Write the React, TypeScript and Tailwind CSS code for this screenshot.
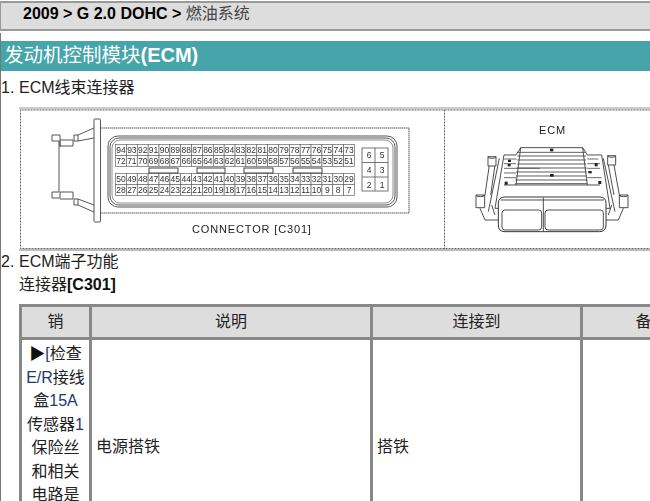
const row = (from: number) => Array.from({ length: 22 }, (_, i) => from - i);
const rowsY = [150, 161, 179, 190];
const rowsFrom = [94, 72, 50, 28];

function Diagram() {
  return (
    <svg width="631" height="145" viewBox="19 107 631 145" className="block" fontFamily="'Liberation Sans', sans-serif">
      <defs>
        <filter id="soft" x="0" y="0" width="100%" height="100%">
          <feGaussianBlur stdDeviation="0.3" />
        </filter>
      </defs>
      <g filter="url(#soft)">
        <rect x="19" y="107" width="640" height="2.500" fill="#ccc" />
        <rect x="19" y="249" width="640" height="2" fill="#bbb" />
        <path d="M20.500 110V248.500H660M20.500 110H660M444.500 110V249" fill="none" stroke="#666" strokeDasharray="1 .5" />

        <g fill="none" stroke="#444" strokeWidth=".9">
          <rect x="94" y="119" width="6.500" height="103" rx="1" />
          <path d="M52 135h8v5h13v6h-13v-6M60 141v6M52 135v6h7v51h-7v6h8v-6h13v7h-13M74 135h4v6h-4zM78 135l16-7M78 141l16-3M74 205h4v-6h-4zM78 199l16 6M78 205l16 7" />
          <path d="M100 128H409V213H100" strokeDasharray="1.500 .5" />
          <rect x="108" y="136" width="289" height="71" rx="10" />
          <rect x="110" y="138" width="285" height="67" rx="9" />
          <rect x="112" y="140" width="281" height="63" rx="8" strokeWidth=".6" />
        </g>

        <g fontSize="8.500" fill="#333" textAnchor="middle" stroke="none">
          {rowsFrom.map((from, r) =>
            row(from).map((n, i) => {
              const x = 121 + i * 10.86;
              return (
                <g key={n}>
                  <rect x={x - 5.430} y={rowsY[r] - 5.500} width="10.860" height="11" fill="#fff" stroke="#666" strokeWidth=".7" />
                  <text x={x} y={rowsY[r] + 3}>{n}</text>
                </g>
              );
            })
          )}
        </g>

        <g fill="#fff" stroke="#444" strokeWidth="1">
          <rect x="149" y="168" width="29" height="5" />
          <rect x="197" y="168" width="28" height="5" />
          <rect x="244" y="168" width="29" height="5" />
          <rect x="293" y="168" width="29" height="5" />
        </g>

        <g fill="none" stroke="#666" strokeWidth=".9">
          <rect x="362" y="148" width="26" height="43" />
          <path d="M375 148v43M362 162.500h26M362 177h26" />
        </g>
        <g fontSize="8.500" fill="#333" textAnchor="middle">
          <text x="369" y="158">6</text>
          <text x="382" y="158">5</text>
          <text x="369" y="173">4</text>
          <text x="382" y="173">3</text>
          <text x="369" y="188">2</text>
          <text x="382" y="188">1</text>
        </g>

        <text x="192" y="233" fontSize="11" fill="#222" letterSpacing=".85">CONNECTOR [C301]</text>
        <text x="539" y="134" fontSize="11" fill="#222" letterSpacing=".8">ECM</text>

        <g transform="translate(430 105) scale(.33333)" fill="none" stroke="#333" strokeWidth="2.600">
          <path d="M222 150H258L272 128H458L472 150H515L540 310H195Z" fill="#fff" />
          <path d="M272 128L258 240M458 128L472 240M222 240H510" />
          <path d="M262 142H466M262 153H468M262 165H468M262 177H468M260 189H470M258 201H470M258 213H470M256 225H472M256 236H472" stroke="#444" />
          <path d="M222 162H260M222 176H258M222 190H330M222 204H258M222 218H258M472 162H505M472 176H510M472 190H510M472 218H515" stroke="#555" />
          <path d="M178 180L165 270M195 180L182 270M208 160L175 320M520 160L555 320M535 180L552 270M552 180L568 270" />
          <path d="M160 270L150 310L165 345H208M570 270L580 310L565 345H525M185 300L195 330M545 300L535 330" />
          <path d="M174 155h24v28h-24zM174 155a12 5 0 0 0 24 0M533 152h24v28h-24zM533 152a12 5 0 0 0 24 0M138 270h26v38h-26zM138 270a13 5 0 0 0 26 0M568 270h26v38h-26zM568 270a13 5 0 0 0 26 0" fill="#fff" />
          <path d="M205 295Q205 276 225 276H510Q528 276 528 295V360Q528 380 508 380H225Q205 380 205 360Z" fill="#fff" strokeWidth="3" />
          <path d="M212 285H522M340 278V378" />
          <rect x="216" y="315" width="119" height="60" rx="9" />
          <rect x="345" y="315" width="175" height="60" rx="9" />
          <g fill="#222" stroke="none">
            <rect x="360" y="131" width="10" height="8" />
            <rect x="234" y="164" width="9" height="7" />
            <rect x="233" y="177" width="9" height="7" />
            <rect x="360" y="207" width="11" height="8" />
            <rect x="224" y="230" width="9" height="9" />
            <rect x="505" y="228" width="9" height="9" />
            <rect x="494" y="174" width="9" height="10" />
            <rect x="475" y="198" width="10" height="7" />
          </g>
        </g>
      </g>
    </svg>
  );
}

const lines = [
  <><span className="text-[#111]">▶</span><span className="text-[#223a6b]">[</span>检查</>,
  <><span className="text-[#223a6b]">E/R</span>接线</>,
  <>盒<span className="text-[#223a6b]">15A</span></>,
  <>传感器<span className="text-[#223a6b]">1</span></>,
  <>保险丝</>,
  <>和相关</>,
  <>电路是</>,
  <>否开路</>,
  <span className="text-[#223a6b]">]</span>,
];

export default function App() {
  return (
    <div className="w-[650px] h-[501px] overflow-hidden bg-white text-[16px] text-[#222] [font-family:'Liberation_Sans','Noto_Sans_CJK_SC',sans-serif]">
      <div className="h-[30px] bg-[#dddddd] border-y-2 border-y-[#999] border-l border-l-[#999] pl-[22px] leading-[22px] mt-px">
        <b className="font-bold text-black">2009 &gt; G 2.0 DOHC &gt; </b>
        <span className="text-[#444]">燃油系统</span>
      </div>
      <div className="border-l border-l-[#777] mt-[2px] pt-[8px] h-[500px]">
        <div className="h-[30px] bg-[#45a5ab] text-white text-[20px] leading-[28px] pl-[3px]">
          <span className="text-[19.500px]">发动机控制模块</span><b className="font-bold">(ECM)</b>
        </div>
        <div className="flex h-[23px] mt-[5px] leading-[23px]">
          <span className="w-[18px]">1.</span>
          <span>ECM线束连接器</span>
        </div>
        <div className="mt-[8px] ml-[18px]">
          <Diagram />
        </div>
        <div className="flex h-[23px] -mt-[2px] leading-[23px]">
          <span className="w-[18px]">2.</span>
          <span>ECM端子功能</span>
        </div>
        <div className="ml-[18px] h-[23px] leading-[23px]">
          连接器<b className="font-bold text-[#111]">[C301]</b>
        </div>
        <table className="ml-[18px] mt-[8px] w-[701px] table-fixed border-collapse border-[3px] border-[#888]">
          <colgroup>
            <col className="w-[70px]" />
            <col className="w-[281px]" />
            <col className="w-[210px]" />
            <col className="w-[140px]" />
          </colgroup>
          <thead>
            <tr className="h-[33px] bg-[#dddddd]">
              <th className="border-[3px] border-[#888] font-normal text-center">销</th>
              <th className="border-[3px] border-[#888] font-normal text-center">说明</th>
              <th className="border-[3px] border-[#888] font-normal text-center">连接到</th>
              <th className="border-[3px] border-[#888] font-normal text-center">备注</th>
            </tr>
          </thead>
          <tbody>
            <tr>
              <td className="border-[3px] border-[#888] text-center leading-[23.500px] pt-[2px]">
                {lines.map((l, i) => (
                  <div key={i}>{l}</div>
                ))}
              </td>
              <td className="border-[3px] border-[#888] pl-[4px] align-middle">电源搭铁</td>
              <td className="border-[3px] border-[#888] pl-[4px] align-middle">搭铁</td>
              <td className="border-[3px] border-[#888]" />
            </tr>
          </tbody>
        </table>
      </div>
    </div>
  );
}
